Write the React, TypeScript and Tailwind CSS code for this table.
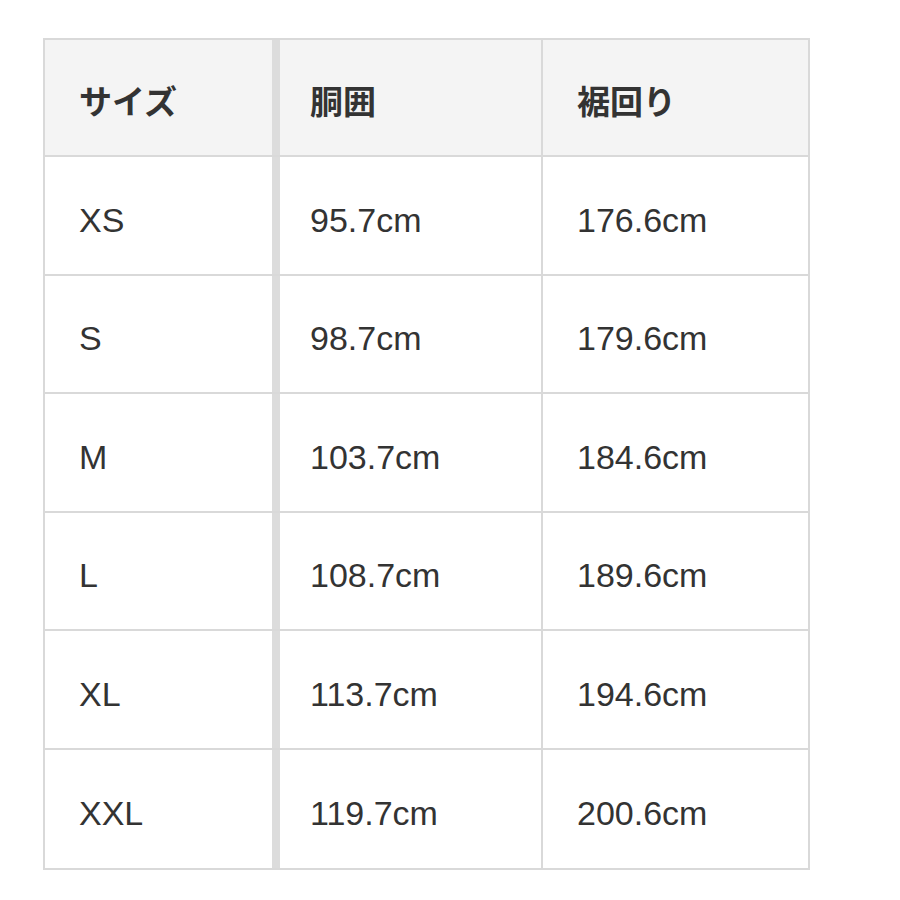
import React from 'react'

const rows = [
  ['XS', '95.7cm', '176.6cm'],
  ['S', '98.7cm', '179.6cm'],
  ['M', '103.7cm', '184.6cm'],
  ['L', '108.7cm', '189.6cm'],
  ['XL', '113.7cm', '194.6cm'],
  ['XXL', '119.7cm', '200.6cm'],
]

const font = "font-['Liberation_Sans','Noto_Sans_CJK_JP',sans-serif]"

export default function App() {
  return (
    <div className="min-h-[900px] w-[900px] bg-white pl-[43px] pt-[38px]">
      <div className={`w-[767px] border-2 border-[#d9d9d9] divide-y-2 divide-[#d9d9d9] text-[#333] ${font}`}>
        {/* header */}
        <div className="flex h-[117px] bg-[#f4f4f4] font-['Noto_Sans_CJK_JP',sans-serif] text-[33px] font-bold">
          <div className="flex w-[227px] items-center pl-[34px] pt-[6px]">サイズ</div>
          <div className="flex w-[269px] items-center border-l-8 border-[#dcdcdc] pl-[30px] pt-[6px]">胴囲</div>
          <div className="flex flex-1 items-center border-l-2 border-[#d9d9d9] pl-[34px] pt-[6px]">裾回り</div>
        </div>
        {rows.map(([size, waist, hem]) => (
          <div key={size} className="flex h-[118.5px] text-[34px]">
            <div className="flex w-[227px] items-center pl-[34px] pt-[10px]">{size}</div>
            <div className="flex w-[269px] items-center border-l-8 border-[#dcdcdc] pl-[30px] pt-[10px]">{waist}</div>
            <div className="flex flex-1 items-center border-l-2 border-[#d9d9d9] pl-[34px] pt-[10px]">{hem}</div>
          </div>
        ))}
      </div>
    </div>
  )
}
